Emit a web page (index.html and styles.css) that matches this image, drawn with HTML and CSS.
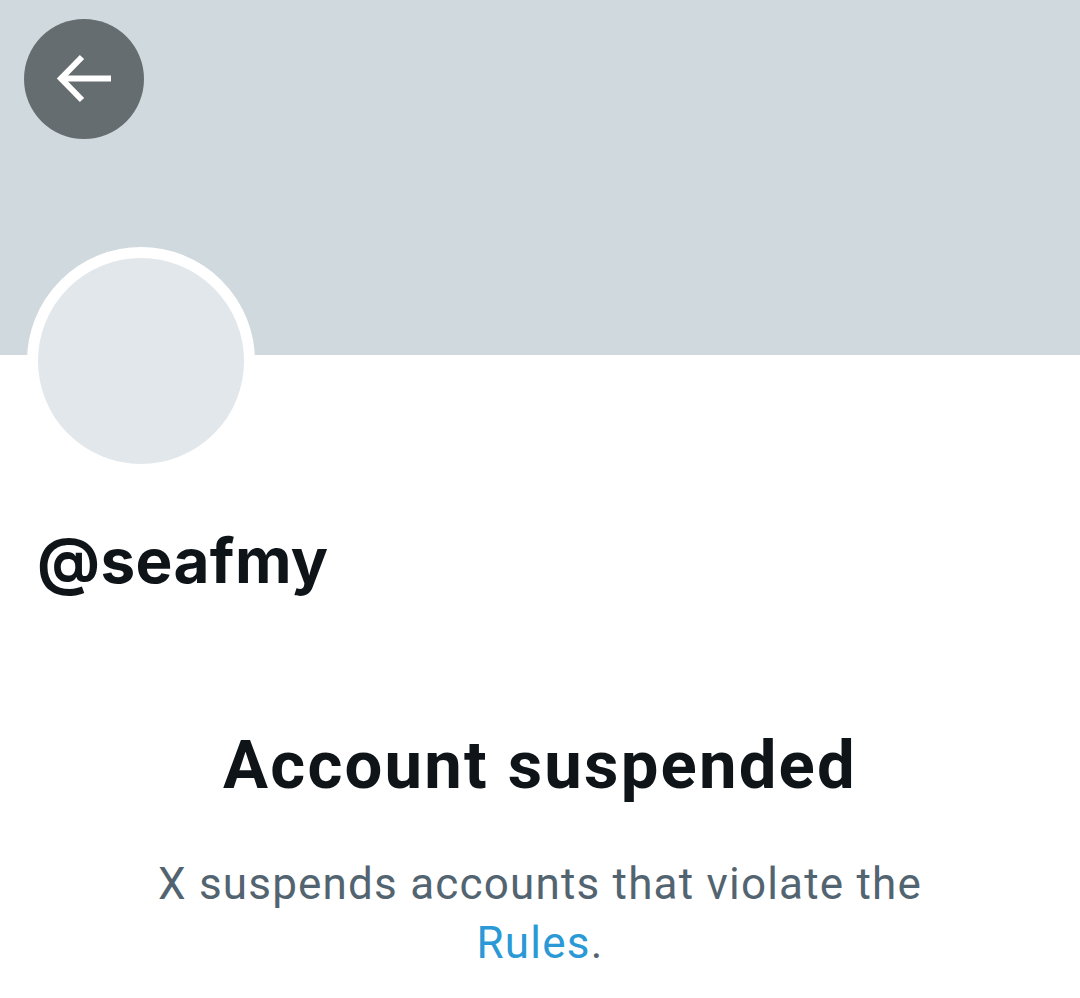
FILE: index.html
```html
<!DOCTYPE html>
<html lang="en">
<head>
<meta charset="utf-8">
<title>Account suspended</title>
<link rel="stylesheet" href="styles.css">
</head>
<body>
<div class="page">
  <header class="banner">
    <button class="back" aria-label="Back">
      <svg viewBox="0 0 60 60" width="60" height="60" aria-hidden="true">
        <path d="M28 8 L7 29.5 L28 51 M7 29.5 H57" fill="none" stroke="#fff" stroke-width="6" stroke-linecap="butt" stroke-linejoin="miter"/>
      </svg>
    </button>
  </header>
  <div class="avatar-wrap">
    <div class="avatar"></div>
  </div>
  <div class="handle">@seafmy</div>
  <section class="notice">
    <h1 class="title">Account suspended</h1>
    <p class="desc">X suspends accounts that violate the <a class="link" href="#">Rules</a>.</p>
  </section>
</div>
</body>
</html>
```

FILE: styles.css
```css
* { box-sizing: border-box; }
html, body { margin: 0; padding: 0; background: #fff; }
body { font-family: "Inter", "Liberation Sans", sans-serif; color: #0f1419; }
.page { width: 1080px; height: 998px; overflow: hidden; }
.banner {
  position: relative;
  height: 355px;
  background: #cfd9de;
}
.back {
  position: absolute;
  left: 24px;
  top: 19px;
  width: 120px;
  height: 120px;
  border-radius: 50%;
  border: none;
  padding: 0;
  background: #666d70;
  display: flex;
  align-items: center;
  justify-content: center;
}
.back svg { display: block; }
.avatar-wrap {
  margin-top: -108px;
  padding-left: 27px;
}
.avatar {
  width: 228px;
  height: 228px;
  border-radius: 50%;
  border: 11px solid #fff;
  background: #e1e7ea;
  position: relative;
}
.handle {
  margin-top: 48px;
  padding-left: 37px;
  font-family: "Inter", "Liberation Sans", sans-serif;
  font-weight: 700;
  font-size: 62px;
  line-height: 75px;
  letter-spacing: 0.4px;
  color: #0f1419;
}
.notice {
  margin-top: 127px;
  text-align: center;
}
.title {
  margin: 0;
  font-family: "Roboto", "Liberation Sans", sans-serif;
  font-weight: 700;
  font-size: 67px;
  line-height: 80px;
  letter-spacing: 2.2px;
  color: #0f1419;
}
.desc {
  margin: 50px 0 0;
  font-family: "Roboto", "Liberation Sans", sans-serif;
  font-weight: 400;
  font-size: 44px;
  line-height: 59px;
  letter-spacing: 1.2px;
  color: #536471;
  padding: 0 140px;
}
.link { color: #2a99d6; text-decoration: none; }
```
